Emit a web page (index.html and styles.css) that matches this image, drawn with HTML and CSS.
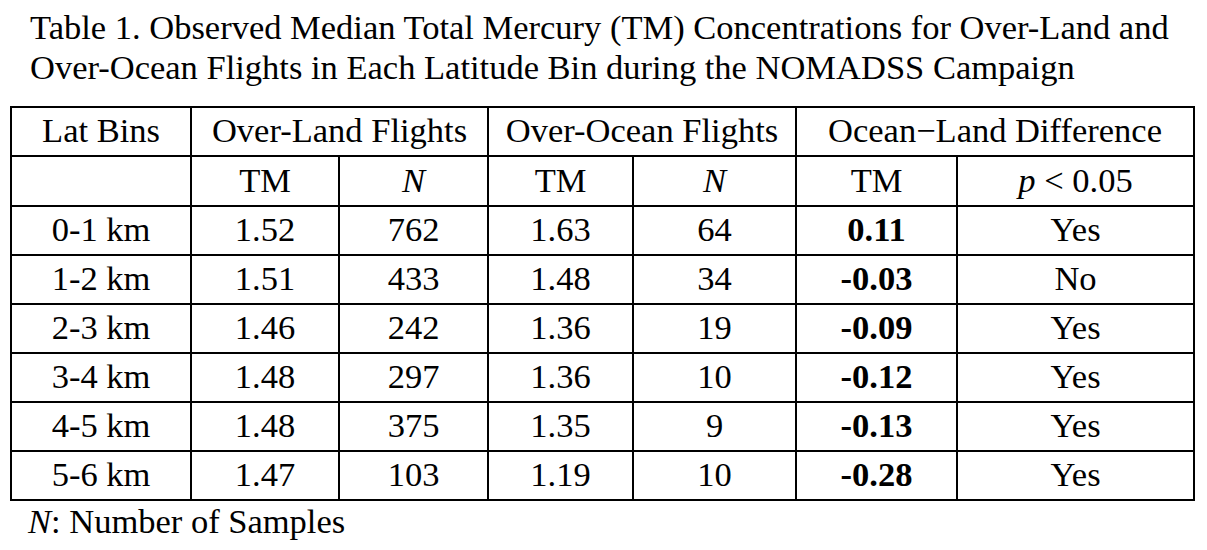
FILE: index.html
```html
<!DOCTYPE html>
<html>
<head>
<meta charset="utf-8">
<link rel="stylesheet" href="styles.css">
</head>
<body>
<div class="page">
  <div class="title">Table 1. Observed Median Total Mercury (TM) Concentrations for Over-Land and<br>Over-Ocean Flights in Each Latitude Bin during the NOMADSS Campaign</div>
  <table class="data">
    <colgroup>
      <col class="c1"><col class="c2"><col class="c3"><col class="c4"><col class="c5"><col class="c6"><col class="c7">
    </colgroup>
    <tr class="h1">
      <td>Lat Bins</td>
      <td colspan="2">Over-Land Flights</td>
      <td colspan="2">Over-Ocean Flights</td>
      <td colspan="2">Ocean&minus;Land Difference</td>
    </tr>
    <tr class="h2">
      <td></td>
      <td>TM</td><td><i>N</i></td>
      <td>TM</td><td><i>N</i></td>
      <td>TM</td><td><i>p</i> &lt; 0.05</td>
    </tr>
    <tr><td>0-1 km</td><td>1.52</td><td>762</td><td>1.63</td><td>64</td><td><b>0.11</b></td><td>Yes</td></tr>
    <tr><td>1-2 km</td><td>1.51</td><td>433</td><td>1.48</td><td>34</td><td><b>-0.03</b></td><td>No</td></tr>
    <tr><td>2-3 km</td><td>1.46</td><td>242</td><td>1.36</td><td>19</td><td><b>-0.09</b></td><td>Yes</td></tr>
    <tr><td>3-4 km</td><td>1.48</td><td>297</td><td>1.36</td><td>10</td><td><b>-0.12</b></td><td>Yes</td></tr>
    <tr><td>4-5 km</td><td>1.48</td><td>375</td><td>1.35</td><td>9</td><td><b>-0.13</b></td><td>Yes</td></tr>
    <tr><td>5-6 km</td><td>1.47</td><td>103</td><td>1.19</td><td>10</td><td><b>-0.28</b></td><td>Yes</td></tr>
  </table>
  <div class="note"><i>N</i>: Number of Samples</div>
</div>
</body>
</html>
```
FILE: styles.css
```css
html, body {
  margin: 0;
  padding: 0;
  background: #fff;
}
.page {
  font-family: "Liberation Serif", "Times New Roman", serif;
  color: #000;
  padding: 7px 0 0 10px;
}
.title {
  font-size: 34.5px;
  line-height: 40px;
  padding-left: 20px;
}
.data {
  margin-top: 19px;
  border-collapse: collapse;
  table-layout: fixed;
  width: 1183px;
  font-size: 34.5px;
}
.c1 { width: 180px; }
.c2 { width: 148px; }
.c3 { width: 149px; }
.c4 { width: 145px; }
.c5 { width: 163px; }
.c6 { width: 161px; }
.c7 { width: 237px; }
.data td {
  border: 2.5px solid #000;
  text-align: center;
  vertical-align: middle;
  padding: 0 0 3px 0;
  height: 44px;
  line-height: 36px;
}
.data tr.h2 td { height: 45px; }
.data b { font-weight: bold; }
.note {
  font-size: 34.5px;
  line-height: 40px;
  padding-left: 18px;
  margin-top: 0;
}
```
